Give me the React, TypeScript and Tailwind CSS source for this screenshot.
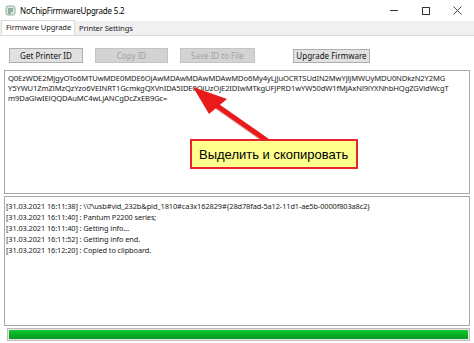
import React from "react";

const idLines = [
  "Q0EzWDE2MjgyOTo6MTUwMDE0MDE6OjAwMDAwMDAwMDAwMDo6My4yLjJuOCRTSUdIN2MwYjljMWUyMDU0NDkzN2Y2MG",
  "Y5YWU1ZmZlMzQzYzo6VEINRT1GcmkgQXVnIDA5IDE0OjUzOjE2IDIwMTkgUFJPRD1wYW50dW1fMjAxNl9iYXNhbHQgZGVidWcgT",
  "m9DaGlwIElQQDAuMC4wLjANCgDcZxEB9Gc=",
];

const logLines = [
  "[31.03.2021 16:11:38] : \\\\?\\usb#vid_232b&pid_1810#ca3x162829#{28d78fad-5a12-11d1-ae5b-0000f803a8c2}",
  "[31.03.2021 16:11:40] : Pantum P2200 series;",
  "[31.03.2021 16:11:40] : Getting info...",
  "[31.03.2021 16:11:52] : Getting info end.",
  "[31.03.2021 16:12:20] : Copied to clipboard.",
];

const AppIcon = () => (
  <svg width="11" height="11" viewBox="0 0 11 11">
    <rect x="1" y="1" width="9" height="9" rx="2" fill="#dfe9e4" stroke="#7a9a8a" strokeWidth="0.8" />
    <path d="M3 4h5M3 6h5M3 8h3" stroke="#3f7a5c" strokeWidth="1" />
  </svg>
);

export default function App() {
  return (
    <div className="relative w-[474px] h-[343px] overflow-hidden bg-white text-[9px] text-[#1a1a1a] font-['Noto_Sans',sans-serif] leading-none">
      {/* title bar */}
      <div className="flex items-center h-[21px] pl-[5px]">
        <AppIcon />
        <span className="ml-[4px] text-[8px] tracking-[-0.2px] text-black whitespace-nowrap">NoChipFirmwareUpgrade 5.2</span>
        <div className="ml-auto flex items-center h-full text-[#222]">
          <div className="w-[33px] flex justify-center">
            <div className="w-[8px] h-px bg-[#333]" />
          </div>
          <div className="w-[32px] flex justify-center">
            <div className="w-[8px] h-[8px] border border-[#333]" />
          </div>
          <div className="w-[30px] flex justify-center mr-[2px]">
            <svg width="9" height="9" viewBox="0 0 9 9">
              <path d="M0.5 0.5L8.5 8.5M8.5 0.5L0.5 8.5" stroke="#333" strokeWidth="0.9" />
            </svg>
          </div>
        </div>
      </div>

      {/* tabs */}
      <div className="flex items-end h-[15px] bg-[#f0f0f0] border-b border-[#dadada] text-[7.6px] tracking-[-0.1px] whitespace-nowrap">
        <div className="h-[15px] w-[74px] ml-[1px] bg-white border border-b-0 border-[#dadada] flex items-center pl-[4px]">
          Firmware Upgrade
        </div>
        <div className="h-[12px] pl-[4px] pr-[5px] flex items-center">Printer Settings</div>
      </div>

      {/* buttons */}
      <div className="flex items-center h-[15px] mt-[12px] text-[8px] whitespace-nowrap">
        <button className="ml-[9px] w-[74px] h-[15px] bg-[#e1e1e1] border border-[#adadad] text-[#111]">
          Get Printer ID
        </button>
        <button className="ml-[12px] w-[73px] h-[15px] bg-[#d3d3d3] border border-[#c4c4c4] text-[#a2a2a2]">
          Copy ID
        </button>
        <button className="ml-[12px] w-[75px] h-[15px] bg-[#d3d3d3] border border-[#c4c4c4] text-[#a2a2a2]">
          Save ID to File
        </button>
        <button className="ml-[38px] w-[77px] h-[14px] bg-[#e1e1e1] border border-[#adadad] text-[#111]">
          Upgrade Firmware
        </button>
      </div>

      {/* id text box */}
      <div className="mt-[7px] ml-[4px] w-[466px] h-[124px] border border-[#a8a8a8] pt-[4px] pl-[3px] text-[7.6px] tracking-[-0.1px]">
        {idLines.map((l) => (
          <div key={l} className="h-[10px] whitespace-nowrap">
            {l}
          </div>
        ))}
      </div>

      {/* log box */}
      <div className="mt-[2px] ml-[4px] w-[466px] h-[130px] border border-[#a8a8a8] pt-[6px] pl-[1px] text-[7.4px] tracking-[-0.1px]">
        {logLines.map((l, i) => (
          <div key={i} className="h-[11px] whitespace-nowrap">
            {l}
          </div>
        ))}
      </div>

      {/* progress */}
      <div className="mt-[2px] ml-[7px] w-[463px] h-[13px] bg-[#e6e6e6] border border-[#bcbcbc] p-px">
        <div className="w-full h-full bg-gradient-to-b from-[#16c935] via-[#06b025] to-[#0a9a22]" />
      </div>

      {/* annotation arrow */}
      <svg className="absolute left-0 top-0" width="474" height="343" viewBox="0 0 474 343">
        <line x1="267" y1="141" x2="210" y2="101" stroke="#b81010" strokeWidth="6" strokeLinecap="round" opacity="0.35" transform="translate(1 1)" />
        <line x1="266" y1="140" x2="210" y2="101" stroke="#e81a1a" strokeWidth="5" strokeLinecap="round" />
        <polygon points="193,87 227,99 209,114" fill="#e81a1a" />
      </svg>

      {/* callout */}
      <div className="absolute left-[190px] top-[139px] w-[168px] h-[30px] bg-[#ffff8e] border-2 border-[#e6262a] flex items-center pl-[7px] text-[13px] text-black whitespace-nowrap font-['Liberation_Sans',sans-serif]">
        Выделить и скопировать
      </div>
    </div>
  );
}
